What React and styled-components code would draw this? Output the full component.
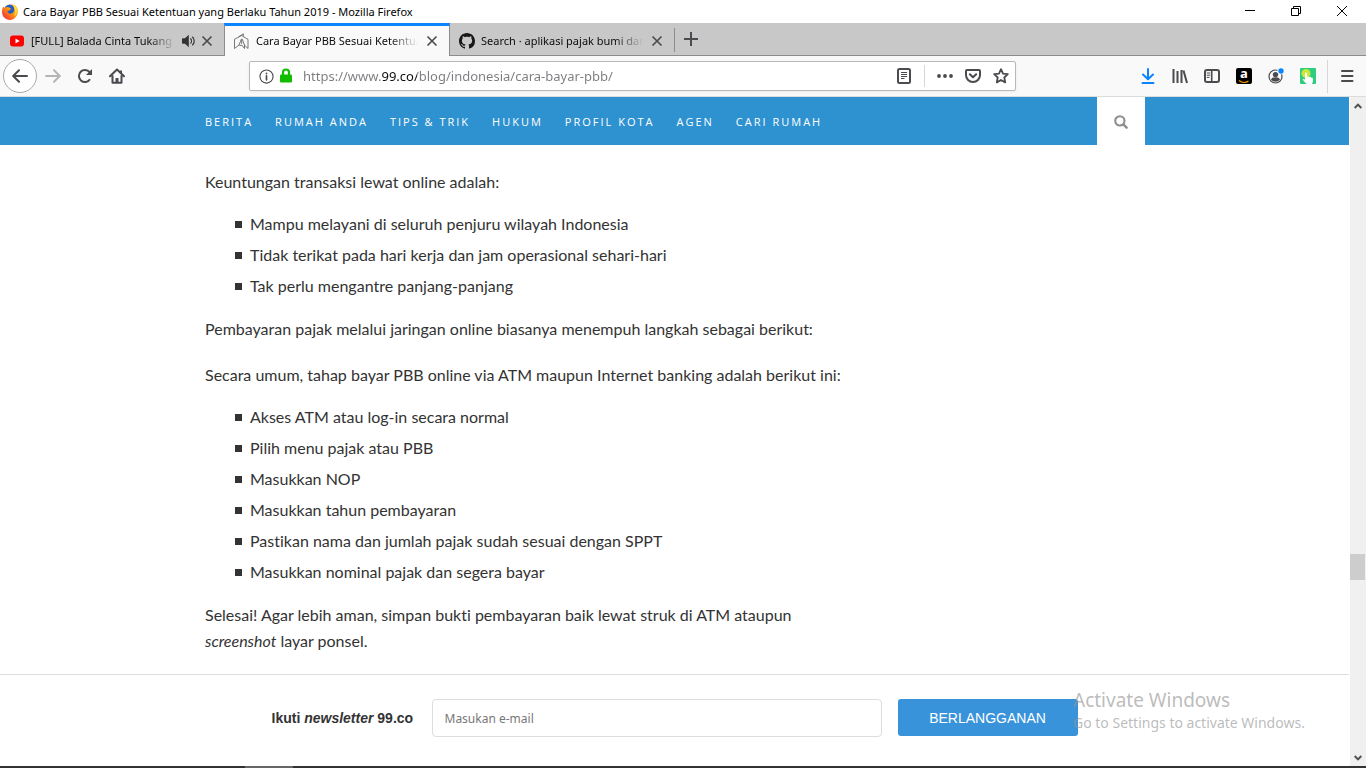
import React from "react";
import styled, { createGlobalStyle, css } from "styled-components";

const UI_FONT = '"Noto Sans", "Open Sans", sans-serif';
const INK = "#4a4a4f";

const GlobalStyle = createGlobalStyle`
  *, *::before, *::after { box-sizing: border-box; }
  body { margin: 0; background: #fff; }
  button, input { font: inherit; margin: 0; padding: 0; border: 0; background: none; color: inherit; }
  svg { display: block; flex: none; }
`;

const Window = styled.div`
  display: flex;
  flex-direction: column;
  height: 100vh;
  overflow: hidden;
  position: relative;
  font: 11px/16px ${UI_FONT};
  color: #000;
`;

const TitleBar = styled.header`
  display: flex;
  align-items: center;
  flex: none;
  height: 23px;
  padding: 0 1px 0 2px;
  gap: 5px;
  white-space: nowrap;
`;

const WindowTitle = styled.span`
  flex: 1;
`;

const WindowButtons = styled.div`
  display: flex;
  margin-top: -2px;
`;

const WindowButton = styled.button`
  display: grid;
  place-items: center;
  width: 46px;
  height: 21px;
`;

const TabStrip = styled.div`
  display: flex;
  flex: none;
  height: 33px;
  background: #c8c8c8;
  box-shadow: inset 0 -1px #8c8c8c;
`;

const Tab = styled.div`
  display: flex;
  align-items: center;
  width: 225px;
  padding: 2px 10px 0 9px;
  gap: 6px;
  ${(p) =>
    p.$active &&
    css`
      background: #f9f9fa;
      border-top: 3px solid #0a84ff;
      border-left: 1px solid #8c8c8c;
      border-right: 1px solid #8c8c8c;
      padding: 0 9px 0 8px;
      width: 226px;
      margin: 0 0 0 -1px;
      z-index: 1;
    `}
`;

const TabLabel = styled.span`
  flex: 1;
  min-width: 0;
  white-space: nowrap;
  color: #0c0c0d;
  mask-image: linear-gradient(to left, transparent, #000 28px);
`;

const TabIcons = styled.span`
  display: flex;
  align-items: center;
  gap: 3px;
`;

const IconButton = styled.button`
  display: grid;
  place-items: center;
  flex: none;
  width: ${(p) => p.$w || 32}px;
  height: ${(p) => p.$h || 32}px;
  color: ${(p) => p.$color || INK};
`;

const TabDivider = styled.span`
  width: 1px;
  height: 24px;
  margin: 5px 0 0 -1px;
  background: #8c8c8c;
`;

const Toolbar = styled.div`
  display: flex;
  align-items: center;
  flex: none;
  height: 41px;
  padding: 0 3px;
  background: #f9f9fa;
  border-bottom: 1px solid #dcdcdc;
`;

const BackButton = styled(IconButton)`
  width: 34px;
  height: 34px;
  border: 1px solid #a9a9a9;
  border-radius: 50%;
  background: #fff;
`;

const Spacer = styled.span`
  flex: 117 1 0;
`;

const UrlBar = styled.div`
  display: flex;
  align-items: center;
  flex: 763 1 0;
  height: 30px;
  border: 1px solid #b8b8b8;
  border-radius: 2px;
  background: #fff;
  padding-left: 8px;
  box-shadow: 0 1px 3px rgba(0, 0, 0, 0.06);
`;

const UrlInput = styled.input`
  flex: 1;
  min-width: 0;
  height: 26px;
  margin-left: 5px;
  font: 13px/20px ${UI_FONT};
  color: transparent;
  background: linear-gradient(90deg, #7c7c80 78px, #0c0c0d 78px, #0c0c0d 114px, #7c7c80 114px);
  background-clip: text;
  -webkit-background-clip: text;
  outline: 0;
`;

const Divider = styled.span`
  flex: none;
  width: 1px;
  height: ${(p) => p.$h}px;
  margin: ${(p) => p.$m};
  background: #d7d7db;
`;

const Viewport = styled.div`
  display: flex;
  flex: 1;
  min-height: 0;
`;

const Page = styled.div`
  display: flex;
  flex-direction: column;
  flex: 1;
  min-width: 0;
  background: #fff;
`;

const Container = styled.div`
  display: flex;
  width: 100%;
  max-width: 941px;
  margin: 0 auto;
  padding-left: 1px;
`;

const SiteNav = styled.nav`
  flex: none;
  background: #2e91d0;
`;

const NavLinks = styled.div`
  display: flex;
  align-items: center;
  flex: 1;
  gap: 22px;
`;

const NavLink = styled.a`
  font: 11px/16px "Open Sans", sans-serif;
  letter-spacing: 2px;
  text-transform: uppercase;
  text-decoration: none;
  white-space: nowrap;
  color: #fff;
  padding-top: 2px;
`;

const SearchButton = styled.button`
  display: grid;
  place-items: center;
  width: 48px;
  height: 48px;
  padding-top: 2px;
  background: #fff;
  color: #8f8f8f;
`;

const ArticleArea = styled.main`
  flex: 1;
  min-height: 0;
  overflow: hidden;
  padding-top: 24px;
`;

const Article = styled.article`
  max-width: 640px;
  font: 16px/26px Lato, sans-serif;
  font-variant-ligatures: none;
  color: #333;
`;

const Paragraph = styled.p`
  margin: 0;
  & + & { margin-top: 20px; }
`;

const BulletList = styled.ul`
  margin: 14px 0;
  padding: 0 0 0 30px;
  list-style: none;
`;

const Bullet = styled.li`
  display: flex;
  align-items: flex-start;
  gap: 8px;
  padding-bottom: 2px;
  line-height: 29px;
  &::before {
    content: "";
    width: 7px;
    height: 7px;
    margin-top: 12px;
    background: #333;
  }
`;

const Newsletter = styled.form`
  display: flex;
  align-items: flex-start;
  justify-content: center;
  flex: none;
  height: 92px;
  padding-top: 24px;
  border-top: 1px solid #ddd;
  font-family: "Liberation Sans", Arial, sans-serif;
`;

const NewsletterLabel = styled.label`
  min-width: 146px;
  margin-right: 14px;
  font-size: 14px;
  font-weight: 700;
  line-height: 38px;
  color: #333;
  white-space: nowrap;
`;

const EmailInput = styled.input`
  width: 450px;
  height: 38px;
  margin-right: 16px;
  padding: 0 12px;
  border: 1px solid #ddd;
  border-radius: 4px;
  background: #fff;
  font: 12px/18px ${UI_FONT};
  &::placeholder { color: #777; opacity: 1; }
`;

const SubscribeButton = styled.button`
  width: 180px;
  height: 37px;
  border-radius: 3px;
  background: #3893db;
  color: #fff;
  font-size: 14px;
`;

const Scrollbar = styled.div`
  display: flex;
  flex-direction: column;
  flex: none;
  width: 17px;
  border-left: 1px solid #fff;
  background: #f0f0f0;
`;

const Track = styled.span`
  flex: ${(p) => p.$part} 1 0;
`;

const Thumb = styled.span`
  height: 26px;
  margin-right: 1px;
  background: #cdcdcd;
`;

const Taskbar = styled.div`
  flex: none;
  height: 2px;
  padding-left: 245px;
  background: #333;
`;

const TaskbarItem = styled.div`
  width: 48px;
  height: 2px;
  background: #666;
`;

const Watermark = styled.div`
  position: absolute;
  right: 56px;
  bottom: 35px;
  width: 237px;
  white-space: nowrap;
  pointer-events: none;
  color: rgba(150, 150, 150, 0.65);
  font: 14px/20px ${UI_FONT};
`;

const WatermarkTitle = styled.div`
  font-size: 19px;
  line-height: 26px;
`;

const Line = ({ size = 16, w = 2, children, ...rest }) => (
  <svg width={size} height={size} viewBox="0 0 16 16" fill="none" stroke="currentColor" strokeWidth={w} strokeLinecap="round" strokeLinejoin="round" aria-hidden="true" {...rest}>
    {children}
  </svg>
);

const FirefoxLogo = () => (
  <svg width="16" height="16" viewBox="0 0 16 16" aria-hidden="true">
    <defs>
      <linearGradient id="fox" x1="1" y1="0" x2="0" y2="1">
        <stop offset="0" stopColor="#ffe226" />
        <stop offset=".45" stopColor="#ff980e" />
        <stop offset="1" stopColor="#f2174a" />
      </linearGradient>
    </defs>
    <circle cx="8" cy="7" r="6.400" fill="#2a5bc0" />
    <path d="M1.200 2.600 2.600 4C4 2.800 6 2.700 7.400 3.500L9 4.800 7.500 6.600 5.400 7c.3 2.300 2.500 3.200 4.600 2.300 2.400-1.100 2.800-4.400 1.500-6.500C10.800 1.700 10 1 9.500.4c3.400-.2 5.800 2 6.200 4.900C16.800 11 13 15.900 8 15.900 3.300 15.900 0 12.300 0 8c0-2 .4-3.900 1.200-5.400z" fill="url(#fox)" />
    <path d="M10.500.8c3.600 1.700 4.900 5 4 8.500-.4 1.300-1.200 2.300-2.200 3C14.300 8 13.500 4 10.500.8z" fill="#ffe44f" />
  </svg>
);

const YoutubeLogo = () => (
  <svg width="16" height="16" viewBox="0 0 16 16" aria-hidden="true">
    <rect x="1" y="2.500" width="14" height="11" rx="3" fill="#f00" />
    <path d="M6.500 5.500v5L10.700 8z" fill="#fff" />
  </svg>
);

const HouseLogo = () => (
  <svg width="17" height="17" viewBox="0 0 17 17" fill="none" stroke="#555" strokeWidth=".8" strokeLinejoin="round" aria-hidden="true">
    <path d="M1.500 15.500V6.300L8.500 2.500l6.500 3.900v9.100l-3.500-3.300M1.500 15.500l4.500-3.500M5.500 4 10.300.8v2.600" />
    <path d="M6 12.200 8.300 6.200h1L11.500 12.200v3.300L9 12.200l-2.600.4M8.700 7v4" />
  </svg>
);

const GithubLogo = () => (
  <svg width="16" height="16" viewBox="0 0 16 16" fill="#191717" aria-hidden="true">
    <path d="M8 0C3.580 0 0 3.580 0 8c0 3.540 2.290 6.530 5.470 7.590.4.070.55-.17.55-.38 0-.19-.01-.82-.01-1.490-2.010.37-2.530-.49-2.690-.94-.09-.23-.48-.94-.82-1.130-.28-.15-.68-.52-.01-.53.63-.01 1.080.58 1.230.82.72 1.210 1.870.87 2.330.66.070-.52.28-.87.51-1.070-1.780-.2-3.640-.89-3.640-3.950 0-.87.31-1.590.82-2.150-.08-.2-.36-1.020.08-2.120 0 0 .67-.21 2.200.82.64-.18 1.320-.27 2-.27s1.360.09 2 .27c1.530-1.040 2.200-.82 2.200-.82.44 1.100.16 1.920.08 2.120.51.56.82 1.270.82 2.150 0 3.070-1.870 3.750-3.650 3.950.29.25.54.73.54 1.480 0 1.070-.01 1.930-.01 2.200 0 .21.15.46.55.38A8.010 8.010 0 0 0 16 8c0-4.420-3.580-8-8-8z" />
  </svg>
);

const CloseIcon = () => (
  <Line size={12} w={2.200} strokeLinecap="butt">
    <path d="M2 2l12 12M14 2L2 14" />
  </Line>
);

const SpeakerIcon = () => (
  <svg width="14" height="14" viewBox="0 0 14 14" aria-hidden="true">
    <path d="M0 5.500C0 4.500.500 4.300 1.200 4.300H3L6.800.8v12.400L3 9.700H1.200C.5 9.700 0 9.500 0 8.500z" fill="#333" />
    <path d="M8.500 4.500c1.300 1.300 1.300 3.700 0 5M10.300 2.800c2.600 2.300 2.600 6.100 0 8.400" fill="none" stroke="#333" strokeWidth="1.200" />
  </svg>
);

const BackIcon = () => <Line><path d="M15 8H1.500M7 2.200 1.200 8 7 13.800" /></Line>;
const ForwardIcon = () => <Line><path d="M1 8h13.500M9 2.200 14.800 8 9 13.800" /></Line>;
const ReloadIcon = () => (
  <Line strokeLinecap="butt">
    <path d="M13 11.200A6 6 0 1 1 12.600 4.200" />
    <path d="M15 1v6H9z" fill="currentColor" stroke="none" />
  </Line>
);
const HomeIcon = () => (
  <Line>
    <path d="M1 8.300 8 1.500l7 6.800M3.500 8v6.800h9V8" />
    <path d="M6.500 14.500v-4.500h3v4.500z" fill="currentColor" stroke="none" />
    <path d="M12 2.500v3" strokeLinecap="butt" />
  </Line>
);
const InfoIcon = () => (
  <Line size={15} w={1.200}>
    <circle cx="8" cy="8" r="7" />
    <path d="M8 7.300v4.200M8 4.500v.4" strokeWidth="1.800" />
  </Line>
);
const LockIcon = () => (
  <svg width="14" height="16" viewBox="0 0 14 16" aria-hidden="true">
    <path d="M4 8V4.500a3 3 0 0 1 6 0V8" fill="none" stroke="#12bc00" strokeWidth="2.200" />
    <rect x="1" y="6.500" width="12" height="8" rx="1.200" fill="#12bc00" />
  </svg>
);
const ReaderIcon = () => (
  <Line>
    <rect x="2" y="1" width="12" height="14" rx="1.500" />
    <path d="M5 4.500h6M5 6.500h6M5 8.500h6M5 10.500h3.500" strokeWidth="1" strokeLinecap="butt" />
  </Line>
);
const DotsIcon = () => (
  <svg width="16" height="16" viewBox="0 0 16 16" fill="currentColor" aria-hidden="true">
    <circle cx="2" cy="8" r="1.900" />
    <circle cx="8" cy="8" r="1.900" />
    <circle cx="14" cy="8" r="1.900" />
  </svg>
);
const PocketIcon = () => (
  <Line>
    <path d="M2 2h12c.6 0 1 .4 1 1v4a7 7 0 0 1-14 0V3c0-.6.4-1 1-1z" />
    <path d="M4.800 6.300 8 9.300l3.200-3" />
  </Line>
);
const StarIcon = () => (
  <Line w={1.800}>
    <path d="M8 1.200 10 5.600l4.800.6-3.500 3.300.9 4.900L8 12l-4.200 2.400.9-4.900L1.200 6.200 6 5.600z" />
  </Line>
);
const DownloadIcon = () => (
  <Line>
    <path d="M8 1v9.500M3 6.500l5 4.800 5-4.800M2.500 15h11" />
  </Line>
);
const LibraryIcon = () => (
  <Line strokeLinecap="butt">
    <path d="M1.500 1v14M5.500 3v12M9.500 2v13M11.500 2.500 15 15" />
  </Line>
);
const SidebarIcon = () => (
  <Line>
    <rect x="1" y="2" width="14" height="12" rx="2" />
    <path d="M7.700 2v12" strokeWidth="1.600" />
    <path d="M3.200 5h2.600M3.200 7.200h2.600M3.200 9.400h1.800" strokeWidth="1" />
  </Line>
);
const AmazonBadge = styled.span`
  display: grid;
  justify-items: center;
  width: 16px;
  height: 16px;
  border-radius: 2px;
  background: #000;
  color: #fff;
  font: 700 13px/11px "Open Sans", sans-serif;
`;
const AmazonIcon = () => (
  <AmazonBadge>
    a
    <svg width="12" height="4" viewBox="0 0 12 4" aria-hidden="true">
      <path d="M1 .6c3 2.300 7 2.300 9.500.4" fill="none" stroke="#f90" strokeWidth="1.200" />
    </svg>
  </AmazonBadge>
);
const AccountIcon = () => (
  <svg width="16" height="16" viewBox="0 0 16 16" aria-hidden="true">
    <circle cx="7.500" cy="8.500" r="6.500" fill="none" stroke={INK} strokeWidth="1.200" />
    <circle cx="7.500" cy="6.600" r="2.700" fill={INK} />
    <path d="M3 11.800c.4-1.700 1.700-2.500 4.500-2.500s4.100.8 4.500 2.500c-2.400 2.600-6.600 2.600-9 0z" fill={INK} />
    <circle cx="13" cy="3" r="3.600" fill="#f9f9fa" />
    <circle cx="13" cy="3" r="2.700" fill="#0a84ff" />
  </svg>
);
const TouchIcon = () => (
  <svg width="16" height="16" viewBox="0 0 16 16" aria-hidden="true">
    <rect width="16" height="16" rx="1" fill="#2fce7e" />
    <circle cx="6" cy="5.500" r="4.500" fill="#c9e83a" />
    <path d="M5 5.500c0-1.300 2-1.300 2 0v3.300l1.200-.6 1 .8 1.300-.3.8 1 1.300.1c.8 2 .4 4.200-.6 6.200H6.500L2.500 11.500c.6-.9 1.500-.7 2.500.3z" fill="#fff" />
  </svg>
);
const MenuIcon = () => <Line size={16}><path d="M3 3h10.500M3 8h10.500M3 13h10.500" /></Line>;

const SearchIcon = () => (
  <Line size={14} w={2.400}>
    <circle cx="6.700" cy="6.700" r="5.300" />
    <path d="M10.800 10.800 14.400 14.400" strokeWidth="2.800" />
  </Line>
);

const Crisp = ({ children }) => (
  <svg width="12" height="12" viewBox="0 0 12 12" fill="none" stroke="#000" aria-hidden="true">{children}</svg>
);

const ScrollArrow = ({ up }) => (
  <IconButton $w={16} $h={17} aria-label={up ? "Scroll up" : "Scroll down"}>
    <svg width="8" height="6" viewBox="0 0 8 6" fill="none" stroke="#505050" strokeWidth="2" aria-hidden="true">
      <path d={up ? "M.7 5 4 1.600 7.300 5" : "M.7 1 4 4.400 7.300 1"} />
    </svg>
  </IconButton>
);

const TABS = [
  { title: "[FULL] Balada Cinta Tukang", icon: <YoutubeLogo />, sound: true },
  { title: "Cara Bayar PBB Sesuai Ketentua", icon: <HouseLogo />, active: true },
  { title: "Search · aplikasi pajak bumi dan", icon: <GithubLogo /> },
];

const LINKS = ["Berita", "Rumah Anda", "Tips & Trik", "Hukum", "Profil Kota", "Agen", "Cari Rumah"];

const BENEFITS = [
  "Mampu melayani di seluruh penjuru wilayah Indonesia",
  "Tidak terikat pada hari kerja dan jam operasional sehari-hari",
  "Tak perlu mengantre panjang-panjang",
];

const STEPS = [
  "Akses ATM atau log-in secara normal",
  "Pilih menu pajak atau PBB",
  "Masukkan NOP",
  "Masukkan tahun pembayaran",
  "Pastikan nama dan jumlah pajak sudah sesuai dengan SPPT",
  "Masukkan nominal pajak dan segera bayar",
];

const Bullets = ({ items }) => (
  <BulletList>
    {items.map((text) => (
      <Bullet key={text}>{text}</Bullet>
    ))}
  </BulletList>
);

export default function App() {
  return (
    <Window>
      <GlobalStyle />
      <TitleBar>
        <FirefoxLogo />
        <WindowTitle>Cara Bayar PBB Sesuai Ketentuan yang Berlaku Tahun 2019 - Mozilla Firefox</WindowTitle>
        <WindowButtons>
          <WindowButton aria-label="Minimize"><Crisp><path d="M1 5.500h10" /></Crisp></WindowButton>
          <WindowButton aria-label="Restore"><Crisp><path d="M1.500 3.500h7v7h-7zM3.500 3.500v-2h7v7h-2" /></Crisp></WindowButton>
          <WindowButton aria-label="Close"><Crisp><path d="M1 1l10 10M11 1L1 11" /></Crisp></WindowButton>
        </WindowButtons>
      </TitleBar>

      <TabStrip>
        {TABS.map((tab) => (
          <Tab key={tab.title} $active={tab.active}>
            {tab.icon}
            <TabLabel>{tab.title}</TabLabel>
            <TabIcons>
              {tab.sound && <IconButton $w={14} $h={16} aria-label="Mute tab"><SpeakerIcon /></IconButton>}
              <IconButton $w={16} $h={16} aria-label="Close tab"><CloseIcon /></IconButton>
            </TabIcons>
          </Tab>
        ))}
        <TabDivider />
        <IconButton aria-label="New tab"><Line strokeLinecap="butt"><path d="M8 1v14M1 8h14" /></Line></IconButton>
      </TabStrip>

      <Toolbar>
        <BackButton aria-label="Back"><BackIcon /></BackButton>
        <IconButton $color="#b5b5b7" aria-label="Forward"><ForwardIcon /></IconButton>
        <IconButton aria-label="Reload"><ReloadIcon /></IconButton>
        <IconButton aria-label="Home"><HomeIcon /></IconButton>
        <Spacer />
        <UrlBar>
          <IconButton $w={16} $h={24} aria-label="Site information"><InfoIcon /></IconButton>
          <IconButton $w={24} $h={24} aria-label="Secure connection"><LockIcon /></IconButton>
          <UrlInput aria-label="Address" defaultValue="https://www.99.co/blog/indonesia/cara-bayar-pbb/" />
          <IconButton $w={28} $h={28} aria-label="Reader view"><ReaderIcon /></IconButton>
          <Divider $h={22} $m="0 6px" />
          <IconButton $w={28} $h={28} aria-label="Page actions"><DotsIcon /></IconButton>
          <IconButton $w={28} $h={28} aria-label="Save to Pocket"><PocketIcon /></IconButton>
          <IconButton $w={28} $h={28} aria-label="Bookmark this page"><StarIcon /></IconButton>
        </UrlBar>
        <Spacer />
        <IconButton $color="#0a84ff" aria-label="Downloads"><DownloadIcon /></IconButton>
        <IconButton aria-label="Library"><LibraryIcon /></IconButton>
        <IconButton aria-label="Sidebars"><SidebarIcon /></IconButton>
        <IconButton aria-label="Amazon"><AmazonIcon /></IconButton>
        <IconButton aria-label="Account"><AccountIcon /></IconButton>
        <IconButton aria-label="Extension"><TouchIcon /></IconButton>
        <Divider $h={33} $m="0 3px" />
        <IconButton aria-label="Menu"><MenuIcon /></IconButton>
      </Toolbar>

      <Viewport>
        <Page>
          <SiteNav>
            <Container>
              <NavLinks>
                {LINKS.map((label) => (
                  <NavLink key={label} href="#">{label}</NavLink>
                ))}
              </NavLinks>
              <SearchButton aria-label="Search"><SearchIcon /></SearchButton>
            </Container>
          </SiteNav>
          <ArticleArea>
            <Container>
              <Article>
                <Paragraph>Keuntungan transaksi lewat online adalah:</Paragraph>
                <Bullets items={BENEFITS} />
                <Paragraph>Pembayaran pajak melalui jaringan online biasanya menempuh langkah sebagai berikut:</Paragraph>
                <Paragraph>Secara umum, tahap bayar PBB online via ATM maupun Internet banking adalah berikut ini:</Paragraph>
                <Bullets items={STEPS} />
                <Paragraph>
                  Selesai! Agar lebih aman, simpan bukti pembayaran baik lewat struk di ATM ataupun <em>screenshot</em> layar ponsel.
                </Paragraph>
              </Article>
            </Container>
          </ArticleArea>
          <Newsletter onSubmit={(e) => e.preventDefault()}>
            <NewsletterLabel htmlFor="email">Ikuti <em>newsletter</em> 99.co</NewsletterLabel>
            <EmailInput id="email" type="email" placeholder="Masukan e-mail" />
            <SubscribeButton type="submit">BERLANGGANAN</SubscribeButton>
          </Newsletter>
        </Page>
        <Scrollbar>
          <ScrollArrow up />
          <Track $part={440} />
          <Thumb />
          <Track $part={169} />
          <ScrollArrow />
        </Scrollbar>
      </Viewport>

      <Taskbar><TaskbarItem /></Taskbar>
      <Watermark>
        <WatermarkTitle>Activate Windows</WatermarkTitle>
        Go to Settings to activate Windows.
      </Watermark>
    </Window>
  );
}
